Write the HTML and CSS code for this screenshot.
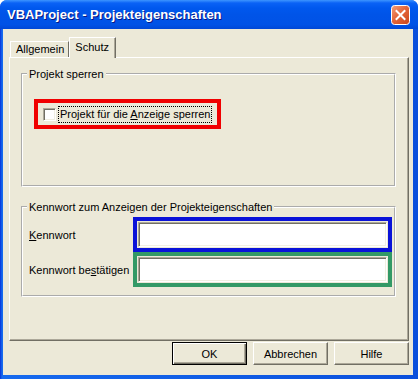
FILE: index.html
```html
<!DOCTYPE html>
<html lang="de">
<head>
    <meta charset="UTF-8">
    <title>VBAProject - Projekteigenschaften</title>
    <link rel="stylesheet" href="styles.css">
</head>
<body>
<div class="window">
    <div class="titlebar">
        <span class="title">VBAProject - Projekteigenschaften</span>
        <svg class="close" width="19" height="20" viewBox="0 0 19 20">
            <defs>
                <linearGradient id="cg" x1="0" y1="0" x2="1" y2="1">
                    <stop offset="0" stop-color="#f4a07c"/>
                    <stop offset="0.45" stop-color="#e4673b"/>
                    <stop offset="1" stop-color="#cc4418"/>
                </linearGradient>
            </defs>
            <rect x="0.5" y="0.5" width="18" height="19" rx="3" fill="url(#cg)" stroke="#fff"/>
            <path d="M5.5 6 L13.5 14 M13.5 6 L5.5 14" stroke="#fff" stroke-width="2" stroke-linecap="square" fill="none"/>
        </svg>
    </div>
    <div class="client">
        <div class="tabs">
            <div class="tab">Allgemein</div>
            <div class="tab active">Schutz</div>
        </div>
        <div class="panel">
            <fieldset class="group">
                <legend>Projekt sperren</legend>
                <div class="lock">
                    <div class="mark red">
                        <span class="box"></span>
                        <span class="focus">Projekt für die <u>A</u>nzeige sperren</span>
                    </div>
                </div>
            </fieldset>
            <fieldset class="group pass">
                <legend>Kennwort zum Anzeigen der Projekteigenschaften</legend>
                <div class="rows">
                    <div class="row">
                        <span class="lbl"><u>K</u>ennwort</span>
                        <div class="mark blue"><input class="field" type="password"></div>
                    </div>
                    <div class="row">
                        <span class="lbl">Kennwort be<u>s</u>tätigen</span>
                        <div class="mark green"><input class="field" type="password"></div>
                    </div>
                </div>
            </fieldset>
        </div>
        <div class="buttons">
            <button class="btn default">OK</button>
            <button class="btn">Abbrechen</button>
            <button class="btn">Hilfe</button>
        </div>
    </div>
</div>
</body>
</html>
```
FILE: styles.css
```css
* {
    margin: 0;
    padding: 0;
    box-sizing: border-box;
}

body {
    background: #fff;
    font-family: "Liberation Sans", Arial, sans-serif;
    font-size: 11px;
    color: #000;
}

.window {
    width: 418px;
    height: 379px;
    display: flex;
    flex-direction: column;
    background: linear-gradient(90deg, #0831d9 0, #166aee 2px, #0a4fdc 100%);
    border-radius: 7px 7px 0 0;
    overflow: hidden;
}

.titlebar {
    height: 29px;
    flex: none;
    display: flex;
    align-items: center;
    justify-content: space-between;
    padding: 0 8px 0 7px;
    background: linear-gradient(180deg, #3d95ff 0, #0a62f6 3px, #0058ee 8px, #0054e8 50%, #0052e6 85%, #0047d6 100%);
}

.title {
    color: #fff;
    font-weight: bold;
    font-size: 13px;
    text-shadow: 1px 1px 0 #0a1883;
}

.close {
    display: block;
    flex: none;
}

.client {
    flex: 1;
    margin: 0 5px 4px 3px;
    background: #ece9d8;
    padding: 8px 4px 0 6px;
}

.tabs {
    height: 20px;
    display: flex;
    align-items: flex-end;
    padding-left: 1px;
}

.tab {
    height: 16px;
    line-height: 15px;
    padding: 0 4px 0 5px;
    border: 1px solid #fff;
    border-right-color: #716f64;
    border-bottom: 0;
}

.tab.active {
    height: 21px;
    margin-bottom: -1px;
    padding: 2px 6px 0 5px;
    line-height: 15px;
    background: #ece9d8;
    box-shadow: inset -1px 0 0 #aca899;
    position: relative;
    z-index: 1;
}

.panel {
    height: 284px;
    border: 1px solid #fff;
    border-right-color: #716f64;
    border-bottom-color: #716f64;
    box-shadow: inset -1px -1px 0 #aca899;
    padding: 9px 12px 0 11px;
}

.group {
    border: 2px groove #fff;
    padding: 0;
    margin: 0;
    min-width: 0;
}

.group legend {
    margin-left: 4px;
    padding: 0 2px;
    line-height: 14px;
}

.lock {
    padding: 18px 0 56px 11px;
}

.pass {
    margin-top: 13px;
}

.mark {
    border: 4px solid;
}

.red {
    width: 187px;
    height: 30px;
    border-color: #f00000;
    display: flex;
    align-items: center;
    padding-left: 5px;
}

.blue {
    border-color: #0a12d8;
}

.green {
    border-color: #339966;
}

.box {
    width: 13px;
    height: 13px;
    background: #fff;
    border: 1px solid;
    border-color: #aca899 #fff #fff #aca899;
    box-shadow: inset 1px 1px 0 #716f64, inset -1px -1px 0 #f1efe2;
}

.focus {
    margin-left: 3px;
    padding: 0 1px;
    line-height: 15px;
    outline: 1px dotted #000;
}

.rows {
    display: flex;
    flex-direction: column;
    padding: 3px 1px 8px 6px;
}

.row {
    display: flex;
    align-items: center;
}

.lbl {
    width: 104px;
}

.row .mark {
    width: 259px;
    height: 35px;
    padding: 1px;
}

.field {
    display: block;
    width: 100%;
    height: 100%;
    background: #fff;
    border: 1px solid;
    border-color: #aca899 #fff #fff #aca899;
    box-shadow: inset 1px 1px 0 #716f64, inset -1px -1px 0 #f1efe2;
    outline: none;
}

.buttons {
    display: flex;
    justify-content: flex-end;
    gap: 6px;
    margin-top: 1px;
}

.btn {
    width: 75px;
    height: 23px;
    font-family: "Liberation Sans", Arial, sans-serif;
    font-size: 11px;
    color: #000;
    background: #ece9d8;
    border: 1px solid;
    border-color: #fff #716f64 #716f64 #fff;
    box-shadow: inset -1px -1px 0 #aca899;
}

.btn.default {
    border: 1px solid #000;
    box-shadow: inset 1px 1px 0 #fff, inset -1px -1px 0 #716f64, inset -2px -2px 0 #aca899;
}
```
